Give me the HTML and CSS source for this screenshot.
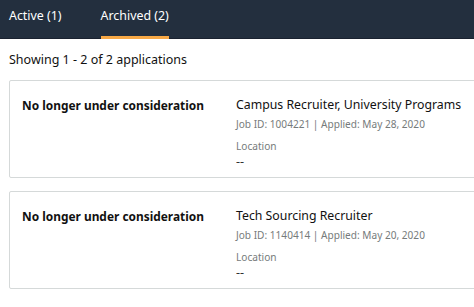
FILE: index.html
```html
<!DOCTYPE html>
<html>
<head>
<meta charset="utf-8">
<link rel="stylesheet" href="styles.css">
</head>
<body>
<nav class="tabs">
  <div class="tab">Active (1)</div>
  <div class="tab tab-active">Archived (2)</div>
</nav>
<main class="content">
  <p class="summary">Showing 1 - 2 of 2 applications</p>
  <section class="card">
    <div class="status">No longer under consideration</div>
    <div class="details">
      <div class="title">Campus Recruiter, University Programs</div>
      <div class="meta">Job ID: 1004221 | Applied: May 28, 2020</div>
      <div class="label">Location</div>
      <div class="value">--</div>
    </div>
  </section>
  <section class="card">
    <div class="status">No longer under consideration</div>
    <div class="details">
      <div class="title">Tech Sourcing Recruiter</div>
      <div class="meta">Job ID: 1140414 | Applied: May 20, 2020</div>
      <div class="label">Location</div>
      <div class="value">--</div>
    </div>
  </section>
</main>
</body>
</html>
```
FILE: styles.css
```css
html, body {
  margin: 0;
  padding: 0;
  background: #fff;
  overflow: hidden;
}
body {
  font-family: "Noto Sans", "Open Sans", sans-serif;
  color: #111;
  width: 474px;
}
.tabs {
  display: flex;
  gap: 39px;
  height: 38px;
  background: #232f3e;
  border-bottom: 1px solid #1a2230;
  padding-left: 9px;
}
.tab {
  color: #fff;
  font-size: 12.4px;
  line-height: 32px;
  border-bottom: 3px solid transparent;
  height: 36px;
  box-sizing: content-box;
}
.tab-active {
  border-bottom-color: #f8a946;
}
.content {
  padding: 0 0 0 9px;
}
.summary {
  margin: 0;
  font-size: 12.5px;
  line-height: 18px;
  padding-top: 12px;
  height: 29px;
}
.card {
  display: flex;
  width: 520px;
  height: 96px;
  border: 1px solid #d5d9d9;
  border-radius: 2px;
  margin-bottom: 13px;
}
.status {
  width: 214px;
  padding: 15px 0 0 12px;
  font-weight: 700;
  font-size: 11.9px;
  line-height: 18px;
}
.details {
  padding-top: 15px;
}
.title {
  font-size: 12.3px;
  line-height: 18px;
}
.meta, .label {
  font-size: 10.1px;
  color: #767b7b;
  line-height: 16px;
}
.meta {
  margin-top: 2px;
}
.label {
  margin-top: 6px;
}
.value {
  font-size: 12.5px;
  line-height: 16px;
  color: #333;
}
```
